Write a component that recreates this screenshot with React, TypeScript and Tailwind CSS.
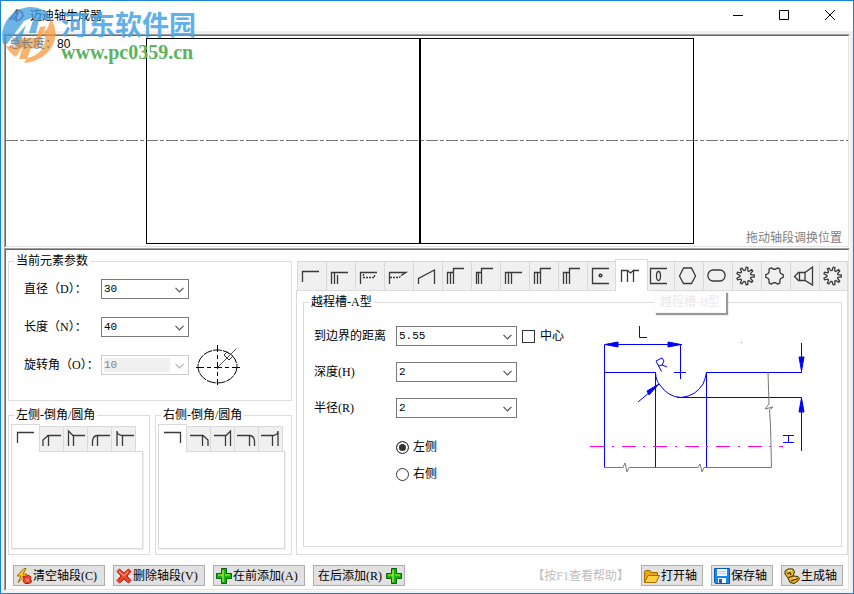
import React from 'react';
import type { ReactNode } from 'react';

const line = { fill: 'none', stroke: '#3a3a3a', strokeWidth: 1 };
const tabLine = { fill: 'none', stroke: '#3a3a3a', strokeWidth: 1.3 };

const gearPoints = (teeth: number, outer: number, inner: number) =>
  Array.from({ length: teeth * 4 }, (_, i) => {
    const step = Math.floor(i / 2);
    const shift = i % 2 === 0 ? -0.28 : 0.28;
    const angle = ((step + shift) * Math.PI) / teeth;
    const r = step % 2 === 0 ? outer : inner;
    return `${(13.5 + r * Math.cos(angle)).toFixed(2)},${(14 + r * Math.sin(angle)).toFixed(2)}`;
  }).join(' ');

const stepIcon = <path d="M5.5 22V10.5H11 M8.5 11V22 M11.5 22V6.5H22" />;
const gearIcon = <polygon points={gearPoints(9, 8.8, 5.6)} />;

const elementTabs: { name: string; icon: ReactNode }[] = [
  { name: '圆柱', icon: <path d="M5.5 20V9.5H22" /> },
  { name: '挡圈槽', icon: <path d="M5.5 22V10.5H22 M8.5 11V22 M11.5 13V22" /> },
  { name: '键槽', icon: <><path d="M5.5 22V10.5H22" /><path d="M8.5 12V15.5H19.5V12" strokeDasharray="2 1" /></> },
  { name: '半圆键槽', icon: <><path d="M5.5 22V10.5H22L18 13" /><path d="M6 15.5H15L19 12" strokeDasharray="2 1" /></> },
  { name: '圆锥', icon: <path d="M5.5 22V16.5L21.5 8V22" /> },
  { name: '退刀槽-A型', icon: stepIcon },
  { name: '退刀槽-B型', icon: <path d="M5.5 22V10.5H10 M7.5 11V22 M10.5 22V6.5H22" /> },
  { name: '退刀槽-C型', icon: <path d="M5.5 22V10.5H22 M8.5 11V22 M11.5 11V22" /> },
  { name: '退刀槽-D型', icon: stepIcon },
  { name: '退刀槽-E型', icon: stepIcon },
  { name: '圆孔', icon: <><path d="M22 6.5H5.5V21.5H22" /><circle cx="13.5" cy="13.5" r="1.3" strokeWidth="1.6" /></> },
  { name: '越程槽-A型', icon: <path d="M4.5 20V8.5H10.5V20 M10.5 8.5L13.5 11L16.5 8.5V20 M16.5 8.5H22" /> },
  { name: '越程槽-B型', icon: <><path d="M22 6.5H5.5V21.5H22" /><ellipse cx="13.5" cy="14" rx="2" ry="4.5" /></> },
  { name: '六角', icon: <polygon points="5.5,14 9.5,6 17.5,6 21.5,14 17.5,21.5 9.5,21.5" /> },
  { name: '扁轴', icon: <rect x="5" y="8" width="17" height="11" rx="5" /> },
  { name: '渐开线花键', icon: gearIcon },
  { name: '矩形花键', icon: <polygon points={gearPoints(6, 8.8, 6.8)} /> },
  { name: '锥齿轮', icon: <path d="M8.5 10.5H15L22.5 5V23L15 18.5H8.5L4.5 14.5Z M9.5 11V18 M15 11V18" /> },
  { name: '齿轮', icon: gearIcon },
];

const edgePaths = [
  'M5.5 16V5.5H22',
  'M3 19V13L8 8.5H21 M8.5 9V19',
  'M4.5 19V4L9 8.5H21 M9.5 9V19',
  'M4.5 19V14Q5 9 9 8.5H22 M9.5 9V19',
  'M5 19V4Q5 8 10 8.5H22 M10.5 9V19',
];

function TitleBar() {
  return (
    <header className="flex h-[30px] items-center bg-white">
      <svg className="ml-2 h-4 w-4" viewBox="0 0 16 16">
        <path d="M1 12L7 3L9 5L4 12M7 13L8 2Q14 3 14 8Q12 12 7 13" fill="none" stroke="#7c3b55" strokeWidth="1.6" />
      </svg>
      <h1 className="ml-[5px] text-xs leading-4">迈迪轴生成器</h1>
      <div className="ml-auto flex">
        <button aria-label="最小化" className="flex h-[30px] w-[46px] items-center justify-center">
          <svg className="h-3 w-3" viewBox="0 0 12 12" {...line} stroke="#000"><path d="M1 5.5H11" /></svg>
        </button>
        <button aria-label="最大化" className="flex h-[30px] w-[46px] items-center justify-center">
          <svg className="h-3 w-3" viewBox="0 0 12 12" {...line} stroke="#000"><path d="M1.5 0.5H10.5V9.5H1.5Z" /></svg>
        </button>
        <button aria-label="关闭" className="flex h-[30px] w-[46px] items-center justify-center">
          <svg className="h-3 w-3" viewBox="0 0 12 12" {...line} stroke="#000"><path d="M1 0L11 10M11 0L1 10" /></svg>
        </button>
      </div>
    </header>
  );
}

function Watermark() {
  return (
    <div className="pointer-events-none absolute top-1 left-px z-20 flex">
      <svg className="h-[60px] w-[56px]" viewBox="0 0 56 60">
        <g fillOpacity="0.75">
          <path d="M1 39C-3 20 9 3 28 2C39 2 47 7 50 15L37 15L34 28H27L32 12L22 16L5 39Z" fill="#3c9ce0" />
          <path d="M10 36L24 20L19 35H26L23 43L15 41Z" fill="#3c9ce0" />
          <path d="M49 14C61 32 48 56 22 58L25 53C40 50 46 38 42 27L45 24Z" fill="#f59a3c" />
          <path d="M4 41L13 42L19 33H34L38 22L44 21L36 43H29L25 54H17L21 41L14 52Q7 48 4 41Z" fill="#f59a3c" />
        </g>
      </svg>
      <div className="ml-[3px] whitespace-nowrap">
        <div className="mt-[5px] text-[27px] leading-8 font-bold text-[#49a6e4]/90">河东软件园</div>
        <div className="font-['Liberation_Serif',serif] text-[20px] leading-5 font-bold text-[#5cb35c]">www.pc0359.cn</div>
      </div>
    </div>
  );
}

function ShaftCanvas() {
  return (
    <section className="relative mx-[3px] mt-[3px] border border-t-[#a0a0a0] border-r-white border-b-white border-l-[#a0a0a0]">
      <div className="border border-t-[#696969] border-r-[#e3e3e3] border-b-[#e3e3e3] border-l-[#696969] bg-white">
        <svg className="block h-[210px] w-full" viewBox="0 0 842 210" fill="none" stroke="#000">
          <path d="M0 104.5H842" stroke="#777" strokeDasharray="12 2 4 2" />
          <rect x="140.5" y="2.5" width="273" height="205" />
          <rect x="414.5" y="2.5" width="273" height="205" />
        </svg>
      </div>
      <div className="absolute top-px left-1 z-30 leading-4 text-[#808080]">
        总长度：<span className="font-['Liberation_Sans',sans-serif] text-black">80</span>
      </div>
      <div className="absolute right-[7px] bottom-px leading-4 text-[#808080]">拖动轴段调换位置</div>
    </section>
  );
}

interface ComboProps {
  id: string;
  value: string;
  disabled?: boolean;
  className: string;
}

function Combo({ id, value, disabled = false, className }: ComboProps) {
  return (
    <div className={`relative h-5 shrink-0 border bg-white p-[2px] ${disabled ? 'border-[#cccccc]' : 'border-[#7a7a7a]'} ${className}`}>
      <select
        id={id}
        disabled={disabled}
        defaultValue={value}
        className="block h-[14px] w-full appearance-none bg-transparent font-['Liberation_Mono',monospace] text-[11px] leading-[14px] disabled:w-[66px] disabled:bg-[#f0f0f0] disabled:text-[#838383] disabled:opacity-100"
      >
        <option>{value}</option>
      </select>
      <svg className="pointer-events-none absolute top-[7px] right-1 h-[6px] w-[9px]" viewBox="0 0 9 6" fill="none" stroke={disabled ? '#b5b5b5' : '#555'} strokeWidth="1.2">
        <path d="M0.5 0.8L4.5 4.8L8.5 0.8" />
      </svg>
    </div>
  );
}

function Group({ title, className, children }: { title: string; className: string; children: ReactNode }) {
  return (
    <fieldset className={`min-w-0 border border-[#dcdcdc] ${className}`}>
      <legend className="ml-[5px] px-[2px] leading-4">{title}</legend>
      {children}
    </fieldset>
  );
}

function CurrentElement() {
  return (
    <Group title="当前元素参数" className="h-[148px]">
      <div className="flex flex-col gap-[18px] pt-[10px] pl-[15px]">
        <div className="flex items-center">
          <label htmlFor="diameter" className="w-[77px] whitespace-nowrap">直径（D）：</label>
          <Combo id="diameter" value="30" className="w-[88px]" />
        </div>
        <div className="flex items-center">
          <label htmlFor="length" className="w-[77px] whitespace-nowrap">长度（N）：</label>
          <Combo id="length" value="40" className="w-[88px]" />
        </div>
        <div className="flex items-center">
          <label htmlFor="angle" className="w-[77px] whitespace-nowrap">旋转角（O）：</label>
          <Combo id="angle" value="10" disabled className="w-[88px]" />
          <svg className="-my-3 ml-[6px] h-[44px] w-[46px]" viewBox="0 0 46 44" fill="none" stroke="#000">
            <ellipse cx="22.5" cy="23.5" rx="19.5" ry="16.5" strokeDasharray="9 1" />
            <path d="M22.5 2V42" strokeDasharray="7 3 4 3" />
            <path d="M1 24.5H45" strokeDasharray="8 3 4 3" />
            <path d="M22.5 24.5L41.5 5.5" stroke="#555" />
            <path d="M29 12L32 9L38 13L34 17Z" stroke="#333" />
          </svg>
        </div>
      </div>
    </Group>
  );
}

function EdgeGroup({ title, mirrored = false, className }: { title: string; mirrored?: boolean; className: string }) {
  return (
    <Group title={title} className={`h-[148px] ${className}`}>
      <div className="flex h-full flex-col pt-px pr-[6px] pb-[5px] pl-[2px]">
        <div className="relative flex shrink-0 items-end" role="tablist">
          {edgePaths.map((d, i) => (
            <button
              key={d}
              role="tab"
              aria-selected={i === 0}
              aria-label={`${title} ${i + 1}`}
              className={i === 0
                ? `relative z-10 -mb-px flex h-7 w-[29px] items-center border border-b-0 border-[#d9d9d9] bg-white ${mirrored ? 'justify-end' : ''}`
                : 'flex h-[25px] w-6 items-center border-t border-r border-[#d9d9d9] bg-[#f0f0f0]'}
            >
              <svg className={`h-6 w-6 shrink-0 ${mirrored ? '-scale-x-100' : ''}`} viewBox="0 0 24 24" {...tabLine}><path d={d} /></svg>
            </button>
          ))}
        </div>
        <div className="flex-1 border border-[#d9d9d9] bg-white shadow-[1px_1px_0_#f0f0f0]" />
      </div>
    </Group>
  );
}

function ElementTabs() {
  return (
    <div className="relative ml-px flex items-end" role="tablist">
      {elementTabs.map(({ name, icon }) => {
        const active = name === '越程槽-A型';
        return (
          <button
            key={name}
            role="tab"
            aria-label={name}
            aria-selected={active}
            className={active
              ? 'relative z-10 -mr-[3px] -mb-px -ml-px flex h-8 w-[33px] shrink-0 items-center justify-center border border-b-0 border-[#d9d9d9] bg-white'
              : 'flex h-[29px] w-[29px] shrink-0 items-center border-t border-l border-[#d9d9d9] bg-[#f0f0f0] last:border-r'}
          >
            <svg className="h-7 w-7 shrink-0" viewBox="1 0 28 28" {...tabLine}>{icon}</svg>
          </button>
        );
      })}
    </div>
  );
}

function GrooveDiagram() {
  return (
    <svg className="mt-[10px] ml-4 h-40 w-60 shrink-0" viewBox="0 0 240 160" fill="none" stroke="#0000ff">
      <path d="M24.5 147V24.5H102 M24.5 52.5H75.5V147 M100.5 24V59 M94 52.5H106 M126.5 147V52.5H221.5V23 M97 77.5H221.5V131" />
      <path d="M75.5 52.5Q76 61 80 65Q88 77 101 77.5Q116 76 123 64Q125 60 126.5 52.5" />
      <path d="M25 24.5L38 22V27Z M101 24.5L88 22V27Z M221.5 51L219 37H224Z M221.5 78L219 92H224Z M79 64L67 71L69 75Z" fill="#0000ff" />
      <path d="M58 82L76 67" />
      <path d="M59.5 6V17.5H67 M203 115.5H214 M203 122.5H214 M208.5 115.5V122.5 M81.5 51.5L76 41L82 38L84 41L82 45L78 46 M82 45L87 47" />
      <path d="M10 126.5H203" stroke="#ff00ff" strokeDasharray="14 8 2 8 14 7 2 8" />
      <path d="M24 147.5H43L45 143L47 152L49 147.5H118L120 144L122 152L124 147.5H191.5L190.5 105L189.5 90L193 87L185 89L189 84L188 52" stroke="#777" />
      <path d="M161 22.5H162" stroke="#a9a93a" />
    </svg>
  );
}

function GrooveForm() {
  const fields = [
    { id: 'distance', label: '到边界的距离', value: '5.55' },
    { id: 'depth', label: '深度(H)', value: '2' },
    { id: 'radius', label: '半径(R)', value: '2' },
  ];
  const radio = 'mr-1 h-[13px] w-[13px] appearance-none rounded-full border border-[#333] bg-white checked:bg-[#333] checked:shadow-[inset_0_0_0_2px_white]';

  return (
    <Group title="越程槽-A型" className="flex-1">
      <div className="flex">
        <div className="ml-[10px] w-[250px] shrink-0 pt-4">
          <div className="flex flex-col gap-4">
            {fields.map((f) => (
              <div key={f.id} className="flex items-center">
                <label htmlFor={f.id} className="w-[82px] whitespace-nowrap">{f.label}</label>
                <Combo id={f.id} value={f.value} className="w-[121px]" />
                {f.id === 'distance' && (
                  <label className="ml-[5px] flex items-center gap-[5px] whitespace-nowrap">
                    <input type="checkbox" className="h-[13px] w-[13px] appearance-none border border-[#333] bg-white checked:bg-[#333]" />
                    中心
                  </label>
                )}
              </div>
            ))}
          </div>
          <div className="mt-5 ml-[82px] flex flex-col gap-[9px]">
            <label className="flex h-[18px] items-center"><input type="radio" name="side" defaultChecked className={radio} />左侧</label>
            <label className="flex h-[18px] items-center"><input type="radio" name="side" className={radio} />右侧</label>
          </div>
        </div>
        <GrooveDiagram />
      </div>
    </Group>
  );
}

function PlusIcon() {
  return (
    <svg className="h-4 w-4 shrink-0" viewBox="0 0 16 16">
      <path d="M5.5 0.5H10.5V5.5H15.5V10.5H10.5V15.5H5.5V10.5H0.5V5.5H5.5Z" fill="#12b512" stroke="#0a5c0a" />
      <path d="M7 14V7H2M7 7V2M9 7H14" fill="none" stroke="#b6f03c" strokeWidth="1.2" />
    </svg>
  );
}

const icons = {
  clear: (
    <svg className="h-4 w-4 shrink-0" viewBox="0 0 16 16">
      <path d="M8 0.5L1 8H5L2 14.5L11 6H7L10 0.5Z" fill="#ffc81e" stroke="#a86a00" />
      <path d="M7 8L9 9L12 7L15 9L14.5 11L15.5 14L13 15.5H9L7 13L8 11Z" fill="#e8452c" stroke="#b01c10" />
      <path d="M10 10.5L13 13.5M13 10.5L10 13.5" stroke="#ffb0a0" />
    </svg>
  ),
  remove: (
    <svg className="h-4 w-4 shrink-0" viewBox="0 0 16 16">
      <path d="M3.5 1L8 5L12.5 1L15 3.5L11 8L15 12.5L12.5 15L8 11L3.5 15L1 12.5L5 8L1 3.5Z" fill="#f04428" stroke="#b81810" />
      <path d="M3 3.5L8 8L12 3.5" fill="none" stroke="#ff9474" strokeWidth="1.2" />
    </svg>
  ),
  open: (
    <svg className="h-4 w-4 shrink-0" viewBox="0 0 16 16" stroke="#a66a00">
      <path d="M0.5 14V3.5L2 2.5H6L7 4.5H13.5V7" fill="#e9a70c" />
      <path d="M0.5 14.5L4 7.5H15.5L12 14.5Z" fill="#ffcf3f" />
    </svg>
  ),
  save: (
    <svg className="h-4 w-4 shrink-0" viewBox="0 0 16 16">
      <path d="M0.5 0.5H15.5V15.5H1.5L0.5 14Z" fill="#1688f0" stroke="#075ab5" />
      <path d="M3 1H13V8H3Z M4 10H12V15H4Z" fill="#f4f8ff" />
      <path d="M4 3.5H12M4 5.5H12" stroke="#c5cbd5" />
      <path d="M5 11H8V15H5Z" fill="#2b5fa8" />
    </svg>
  ),
  build: (
    <svg className="h-4 w-4 shrink-0" viewBox="0 0 16 16" stroke="#3d2c00">
      <path d="M1 3L4 1L9 1L10.5 4L9 8L14 8.5L15.5 10.5L14 13L10 15.5L6 14.5L4 10L1 6Z" fill="#f0b41c" />
      <path d="M3 6L6 4.5L7 7M4.5 9.5L9 8M7 13L14 10.5" fill="none" strokeWidth="1.2" />
      <path d="M4 2.5H8M9 10H12" stroke="#fff0a0" />
    </svg>
  ),
};

function ToolButton({ icon, iconRight, children }: { icon?: ReactNode; iconRight?: ReactNode; children: ReactNode }) {
  return (
    <button className={`flex h-[21px] shrink-0 items-center border border-[#adadad] bg-[#e1e1e1] whitespace-nowrap ${iconRight ? 'justify-between pr-[2px] pl-1' : 'gap-px px-[2px]'}`}>
      {icon}
      {children}
      {iconRight}
    </button>
  );
}

function Footer() {
  return (
    <footer className="flex items-center pt-[10px] pr-[5px] pb-[3px] pl-[7px]">
      <div className="grid grid-cols-[repeat(4,92px)] gap-2">
        <ToolButton icon={icons.clear}>清空轴段(C)</ToolButton>
        <ToolButton icon={icons.remove}>删除轴段(V)</ToolButton>
        <ToolButton icon={<PlusIcon />}>在前添加(A)</ToolButton>
        <ToolButton iconRight={<PlusIcon />}>在后添加(R)</ToolButton>
      </div>
      <p className="mr-3 ml-auto whitespace-nowrap text-[#bdbdbd]">【按F1查看帮助】</p>
      <div className="grid grid-cols-[repeat(3,62px)] gap-2">
        <ToolButton icon={icons.open}>打开轴</ToolButton>
        <ToolButton icon={icons.save}>保存轴</ToolButton>
        <ToolButton icon={icons.build}>生成轴</ToolButton>
      </div>
    </footer>
  );
}

export default function App() {
  return (
    <div className="relative flex min-h-screen flex-col border border-[#1883d7] bg-[#f0f0f0] pb-[2px] font-['Liberation_Serif','Noto_Sans_CJK_SC',sans-serif] text-xs leading-4 text-black">
      <TitleBar />
      <Watermark />
      <ShaftCanvas />
      <section className="mx-[3px] flex flex-1 flex-col border border-t-[#a0a0a0] border-r-white border-b-white border-l-[#a0a0a0]">
        <div className="flex flex-1 flex-col border border-t-[#696969] border-r-[#e3e3e3] border-b-[#e3e3e3] border-l-[#696969] bg-white">
          <div className="flex flex-1 gap-1 pl-[2px]">
            <div className="flex w-[284px] shrink-0 flex-col gap-[6px] pt-[3px]">
              <CurrentElement />
              <div className="flex gap-[5px]">
                <EdgeGroup title="左侧-倒角/圆角" className="w-[142px]" />
                <EdgeGroup title="右侧-倒角/圆角" mirrored className="w-[137px]" />
              </div>
            </div>
            <div className="relative flex min-w-0 flex-1 flex-col pt-[9px]">
              <ElementTabs />
              <div className="flex flex-1 flex-col border border-[#dcdcdc] pt-[3px] pr-[5px] pb-[7px] pl-[6px]">
                <GrooveForm />
              </div>
              <div role="tooltip" className="absolute top-[41px] right-[122px] border border-[#f7f7f7] bg-white px-[5px] py-[3px] leading-[14px] text-[#ebe8ec] shadow-[2px_2px_1px_#999]">
                越程槽-B型
              </div>
            </div>
          </div>
          <Footer />
        </div>
      </section>
    </div>
  );
}
